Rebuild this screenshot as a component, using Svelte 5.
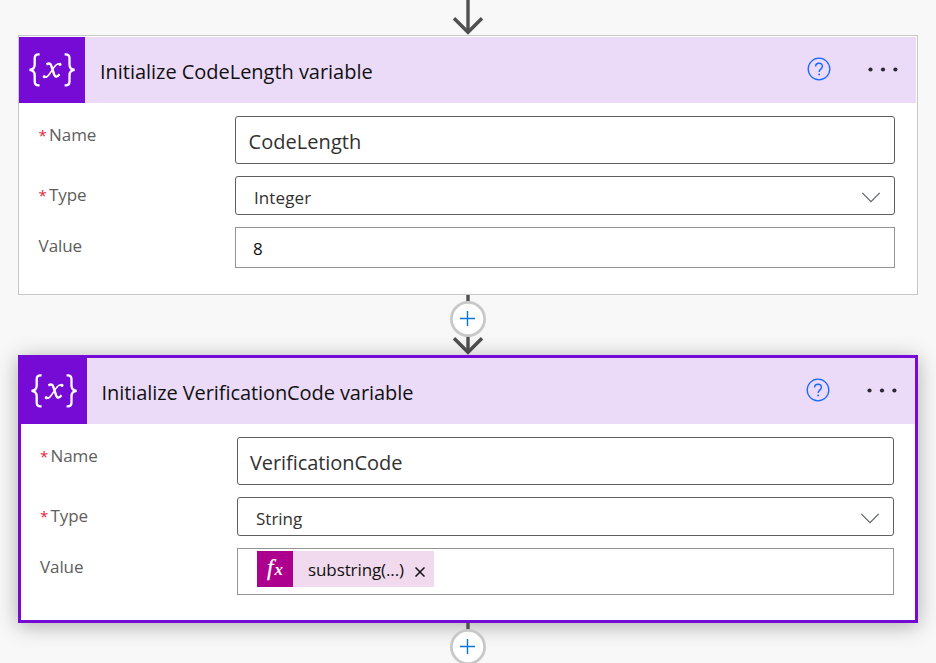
<script>
  const cards = [
    { title: 'Initialize CodeLength variable', name: 'CodeLength', type: 'Integer', value: '8', selected: false },
    { title: 'Initialize VerificationCode variable', name: 'VerificationCode', type: 'String', token: 'substring(...)', selected: true }
  ];
</script>

{#snippet card(c)}
  <section class="card" class:selected={c.selected}>
    <header>
      <div class="tile">
        <svg width="66" height="66" viewBox="0 0 66 66" fill="none" stroke="#fff">
          <path d="M20.6 17.4h-1.1c-2.7 0-3.8 1.3-3.8 3.8v6.3c0 3.2-1.6 5.1-5.2 5.4 3.7.3 5.2 2.3 5.2 5.5v6.1c0 2.6 1.1 3.9 3.8 3.9h1.1M45.6 17.4h1.1c2.7 0 3.8 1.3 3.8 3.8v6.3c0 3.2 1.6 5.1 5.2 5.4-3.7.3-5.2 2.3-5.2 5.5v6.1c0 2.6-1.1 3.9-3.8 3.9h-1.1" stroke-width="2.3" />
          <path d="M27.4 27.3c2.9-1.4 4.2-.8 5 1.8l2.8 8.6c.9 2.8 2.8 2.6 5.3-.4" stroke-width="2.4" />
          <path d="M41.1 26.9c-2.4-.8-4.2.7-6.1 3.5l-4.5 6.6c-1.6 2.5-3.3 3.8-5.4 3.2" stroke-width="1.5" />
          <circle cx="41" cy="27.4" r="1.2" fill="#fff" stroke-width=".8" />
          <circle cx="25.3" cy="39.7" r="1.2" fill="#fff" stroke-width=".8" />
        </svg>
      </div>
      <h2>{c.title}</h2>
      <svg class="help" width="24" height="24" viewBox="0 0 24 24" fill="none" stroke="#1769ff">
        <circle cx="12" cy="12" r="10.8" stroke-width="1.3" />
        <path d="M8.6 9.5c0-2 1.4-3.3 3.4-3.3s3.4 1.2 3.4 3.1c0 2.7-3.3 2.9-3.3 5.6" stroke-width="1.4" />
        <circle cx="12.1" cy="17.4" r=".95" fill="#1769ff" stroke="none" />
      </svg>
      <svg class="more" width="32" height="6" viewBox="0 0 32 6" fill="#2b2a33">
        <circle cx="3.5" cy="2.5" r="2.1" /><circle cx="16" cy="2.5" r="2.1" /><circle cx="28.4" cy="2.5" r="2.1" />
      </svg>
    </header>
    <div class="body">
      <div class="row">
        <span class="label"><i>*</i>Name</span>
        <div class="field name">{c.name}</div>
      </div>
      <div class="row">
        <span class="label"><i>*</i>Type</span>
        <div class="field type">
          <span>{c.type}</span>
          <svg width="20" height="12" viewBox="0 0 20 12" fill="none" stroke="#5b6068" stroke-width="1.2"><path d="M1.3 1.8 10 10.6l8.7-8.8" /></svg>
        </div>
      </div>
      <div class="row">
        <span class="label">Value</span>
        <div class="field value">
          {#if c.token}
            <div class="chip">
              <span class="fx"><b>f</b><em>x</em></span>
              <span class="token">{c.token}</span>
              <svg width="10" height="10" viewBox="0 0 10 10" stroke="#111" stroke-width="1.5"><path d="m.5.5 9 9m0-9-9 9" /></svg>
            </div>
          {:else}
            <span>{c.value}</span>
          {/if}
        </div>
      </div>
    </div>
  </section>
{/snippet}

<main>
  <svg class="arrow" width="36" height="35" viewBox="0 0 36 35" fill="none" stroke="#505050">
    <path d="M18 0v32" stroke-width="3.4" /><path d="m4 18.3 14 14 14-14" stroke-width="3.6" />
  </svg>
  {@render card(cards[0])}
  <svg class="arrow" width="36" height="60" viewBox="0 0 36 60" fill="none" stroke="#505050">
    <path d="M18 0v57" stroke-width="3.4" /><path d="m4 43.3 14 14 14-14" stroke-width="3.6" />
    <circle cx="18" cy="24" r="16.6" fill="#fff" stroke="#c8c8c8" stroke-width="2.8" />
    <path d="M10 23.5h15M17.5 16v15" stroke="#0078d4" stroke-width="1.4" />
  </svg>
  {@render card(cards[1])}
  <svg class="arrow" width="36" height="40" viewBox="0 0 36 40" fill="none" stroke="#505050">
    <path d="M18 0v10" stroke-width="3.4" />
    <circle cx="18" cy="24" r="16.6" fill="#fff" stroke="#c8c8c8" stroke-width="2.8" />
    <path d="M10 23.5h15M17.5 16v15" stroke="#0078d4" stroke-width="1.4" />
  </svg>
</main>

<style>
  main {
    box-sizing: border-box;
    width: 936px;
    height: 663px;
    overflow: hidden;
    background: #f8f8f8;
    display: flex;
    flex-direction: column;
    align-items: center;
    font-family: 'Open Sans', 'Noto Sans', sans-serif;
    color: #323130;
  }
  .arrow { flex: none; display: block; }
  .card {
    flex: none;
    box-sizing: border-box;
    width: 900px;
    height: 260px;
    border: 1px solid #c8c8c8;
    background: #fff;
    padding: 1px 1px 0 0;
  }
  .selected {
    height: 268px;
    border: 3px solid #770bd6;
    padding: 0;
    box-shadow: 0 3px 20px rgba(0, 0, 0, 0.3);
  }
  header { display: flex; align-items: center; height: 66px; background: #ebdbf8; }
  .tile { width: 66px; height: 66px; background: #770bd6; }
  .tile svg { display: block; }
  h2 {
    margin: 3px 0 0 15px;
    flex: 1;
    font-size: 20px;
    line-height: 28px;
    font-weight: 400;
    letter-spacing: -0.03px;
    color: #111;
    white-space: nowrap;
  }
  .selected h2 { margin-left: 14.5px; letter-spacing: -0.08px; }
  .help { margin: 0 36px 2px 0; }
  .more { margin: 0 17px 0 0; }
  .selected .more { margin-right: 17.5px; }
  .selected .help { margin-right: 35.5px; }
  .body { display: flex; flex-direction: column; gap: 12px; padding: 13px 21px 0 19px; }
  .row { display: flex; align-items: flex-start; }
  .label {
    box-sizing: border-box;
    width: 197px;
    flex: none;
    padding-top: 7px;
    line-height: 24px;
    font-size: 17px;
    letter-spacing: -0.1px;
    color: #605e5c;
  }
  .card:not(.selected) .label { padding-left: 0.6px; }
  .label i { font-style: normal; color: #e0263c; display: inline-block; width: 10.5px; font-size: 15px; letter-spacing: 0; }
  .field {
    flex: 1;
    box-sizing: border-box;
    display: flex;
    align-items: center;
    border: 1px solid #605e5c;
    border-radius: 3px;
    white-space: nowrap;
  }
  .name { height: 48px; font-size: 20px; padding: 3px 12px 0; }
  .card:not(.selected) .name { letter-spacing: 0.05px; padding-left: 12.5px; }
  .selected .name { letter-spacing: -0.07px; }
  .type { height: 39px; font-size: 17px; padding: 3px 13px 0 18px; justify-content: space-between; letter-spacing: 0.1px; }
  .selected .type { padding-right: 13.5px; letter-spacing: 0; }
  .value { height: 41px; font-size: 17px; padding: 2px 17px 0; border-color: #949494; border-radius: 0; color: #111; }
  .selected .value { height: 47px; padding: 0 19px 5px; }
  .chip { display: flex; align-items: center; width: 177px; height: 36px; margin-top: -1px; background: #f2daee; }
  .fx {
    width: 36px;
    height: 36px;
    background: #ae008e;
    color: #fff;
    font-family: 'Liberation Serif', serif;
    font-style: italic;
    display: flex;
    justify-content: center;
    align-items: baseline;
    line-height: 33px;
  }
  .fx b { font-size: 23px; font-weight: 400; -webkit-text-stroke: 0.3px #fff; }
  .fx em { font-size: 17px; font-weight: 700; margin-left: 1px; }
  .token { margin: 2px 0 0 15px; flex: 1; letter-spacing: -0.1px; }
  .chip svg { margin: 6px 9px 0 0; }
</style>
